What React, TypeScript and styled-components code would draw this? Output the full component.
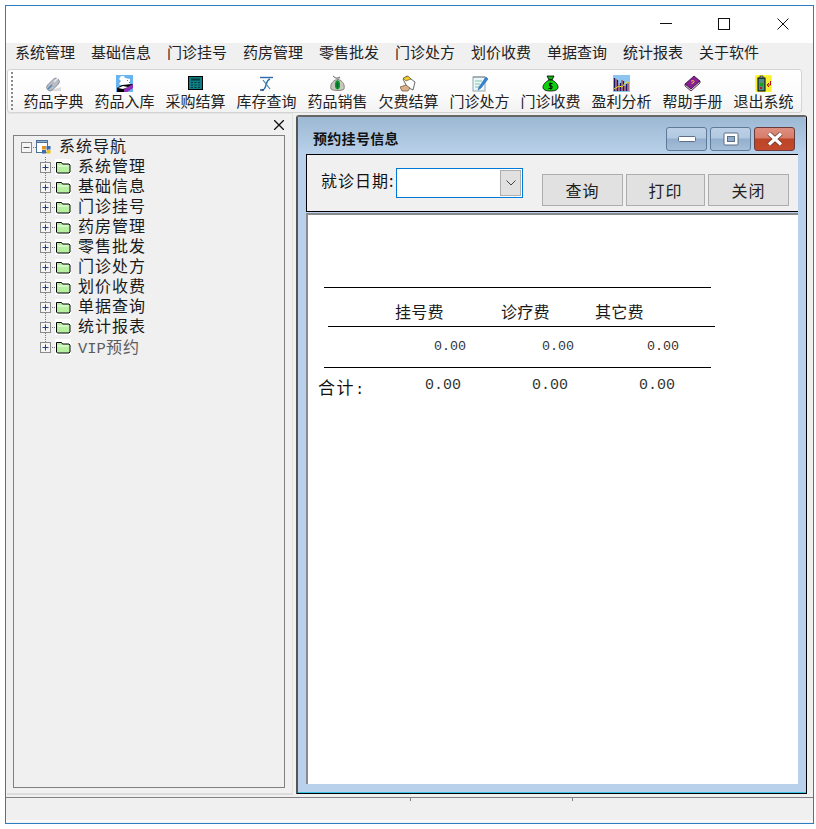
import React from 'react'
import styled, { createGlobalStyle } from 'styled-components'

const GlobalStyle = createGlobalStyle`
  html, body {
    margin: 0;
    padding: 0;
    background: #fff;
    font-family: "Noto Sans CJK SC", "Liberation Sans", sans-serif;
    color: #111;
  }
  * { box-sizing: border-box; }
`
const MONO = `"Liberation Mono", "Noto Sans CJK SC", monospace`

const Window = styled.div`
  margin: 5px 0 0 5px;
  width: 809px;
  height: 819px;
  border: 1px solid #2b7cc0;
  background: #f0f0f0;
  display: flex;
  flex-direction: column;
`
const TitleBar = styled.div`
  height: 37px;
  background: #fff;
  display: flex;
  justify-content: flex-end;
  padding: 0 1px 1px 0;
`
const CaptionButton = styled.div`
  width: 58.5px;
  display: flex;
  align-items: center;
  justify-content: center;
`
const MenuBar = styled.div`
  height: 25px;
  padding: 0 0 7px 1px;
  display: flex;
  align-items: center;
  background: #f0f0f0;
`
const MenuItem = styled.div`
  width: 76px;
  text-align: center;
  font-size: 15px;
  line-height: 18px;
  color: #222;
`
const Toolbar = styled.div`
  height: 44px;
  margin: 1px 11px 0 1px;
  border: 1px solid #d4d4d4;
  border-radius: 3px;
  background: linear-gradient(#ffffff, #fbfbfb 60%, #f2f2f2);
  display: flex;
  padding-left: 3px;
`
const Grip = styled.div`
  width: 2px;
  margin-top: 2px;
  height: 38px;
  background: repeating-linear-gradient(#8a8a8a 0 2px, transparent 2px 4px);
  margin-right: 5px;
`
const ToolItem = styled.div`
  width: 71px;
  display: flex;
  flex-direction: column;
  align-items: center;
  padding-top: 5px;
`
const ToolIcon = styled.svg`
  width: 17px;
  height: 17px;
  display: block;
`
const ToolLabel = styled.div`
  font-size: 15px;
  line-height: 18px;
  white-space: nowrap;
  color: #222;
`
const Main = styled.div`
  height: 682px;
  display: flex;
`
const SidePanel = styled.div`
  width: 286px;
  margin-left: 1px;
  border-top: 1px solid #e4e4e4;
  border-right: 1px solid #e2e2e2;
  border-bottom: 2px solid #dcdcdc;
  display: flex;
  flex-direction: column;
  padding: 0 7px 5px 6px;
`
const SideHead = styled.div`
  height: 21px;
  display: flex;
  align-items: center;
  justify-content: flex-end;
  padding-right: 1px;
`
const TreeBox = styled.div`
  flex: 1;
  border: 1px solid #808080;
  background: #f0f0f0;
  padding-top: 1px;
`
const TreeRow = styled.div<{ $root?: boolean }>`
  height: 20px;
  display: flex;
  align-items: center;
  padding-left: ${(p) => (p.$root ? '2px' : '21px')};
`
const TreeLabel = styled.div<{ $muted?: boolean }>`
  font-size: 16px;
  letter-spacing: 1px;
  line-height: 16px;
  white-space: nowrap;
  margin-left: 7px;
  padding-bottom: ${(p) => (p.$muted ? '0' : '5px')};
  color: ${(p) => (p.$muted ? '#5c5c5c' : '#1a1a1a')};
`
const Latin = styled.span`
  font-family: ${MONO};
  font-size: 15.5px;
  letter-spacing: 0;
`
const MdiArea = styled.div`
  flex: 1;
  margin-left: 3px;
  padding: 0 6px 1px 0;
  display: flex;
`
const Child = styled.div`
  flex: 1;
  margin-top: 2px;
  border: 1px solid #000;
  border-left: 2px solid #555;
  border-top: 2px solid #666;
  border-radius: 3px 3px 0 0;
  background: #b9d1ea;
  box-shadow: inset 0 -1px 0 #3fc3e6;
  display: flex;
  flex-direction: column;
`
const ChildTitle = styled.div`
  height: 37px;
  background: linear-gradient(#9db8d3, #b9d1ea);
  display: flex;
  align-items: center;
  justify-content: space-between;
  padding: 6px 11px 0 15px;
  border-radius: 4px 4px 0 0;
`
const ChildCaption = styled.div`
  font-size: 14px;
  font-weight: 700;
  color: #111;
  letter-spacing: 0.3px;
  padding-bottom: 2px;
`
const ChildButtons = styled.div`
  display: flex;
  gap: 3px;
`
const ChildButton = styled.div<{ $close?: boolean }>`
  width: 41px;
  height: 24px;
  border: 1px solid ${(p) => (p.$close ? '#6b3a3a' : '#5d7a99')};
  border-radius: 3px;
  display: flex;
  align-items: center;
  justify-content: center;
  background: ${(p) =>
    p.$close
      ? 'linear-gradient(#dd8f7f 0, #d67c6a 45%, #bd4527 50%, #c2492c 100%)'
      : 'linear-gradient(#bcd0e6 0, #b2c9e1 45%, #93afcd 50%, #a5bed9 100%)'};
`
const ChildBody = styled.div`
  flex: 1;
  margin: 0 8px 9px 8px;
  display: flex;
  flex-direction: column;
`
const FormBar = styled.div`
  height: 58px;
  background: #f0f0f0;
  border: 1px solid #000;
  border-right: none;
  display: flex;
  padding: 13px 0 0 14px;
`
const FieldLabel = styled.div`
  font-size: 16px;
  line-height: 24px;
  letter-spacing: 1px;
  width: 75px;
  white-space: nowrap;
`
const Combo = styled.div`
  width: 127px;
  height: 30px;
  border: 1px solid #0078d7;
  background: #fff;
  display: flex;
  justify-content: flex-end;
  padding: 1px;
`
const ComboArrow = styled.div`
  width: 21px;
  height: 26px;
  background: #e1e1e1;
  border: 1px solid #adadad;
  display: flex;
  align-items: center;
  justify-content: center;
`
const FormButtons = styled.div`
  display: flex;
  gap: 3px;
  margin: 6px 0 0 19px;
`
const FormButton = styled.div<{ $width: number }>`
  width: ${(p) => p.$width}px;
  height: 32px;
  background: #e1e1e1;
  border: 1px solid #adadad;
  display: flex;
  align-items: center;
  justify-content: center;
  font-size: 16px;
  letter-spacing: 1px;
  color: #222;
`
const ReportSheet = styled.div`
  flex: 1;
  margin-top: 1px;
  background: #fff;
  border-top: 2px solid #8a8a8a;
  border-left: 2px solid #8a8a8a;
  padding-top: 72px;
`
const Rule = styled.div<{ $indent: number }>`
  height: 1px;
  width: 387px;
  margin-left: ${(p) => p.$indent}px;
  background: #000;
`
const ReportRow = styled.div<{ $height: number; $indent: number; $cols: string; $shift?: number }>`
  height: ${(p) => p.$height}px;
  padding: ${(p) => Math.max(p.$shift ?? 0, 0)}px 0 ${(p) => Math.max(-(p.$shift ?? 0), 0)}px ${(p) => p.$indent}px;
  display: grid;
  grid-template-columns: ${(p) => p.$cols};
  align-items: center;
`
const HeadCell = styled.div`
  font-size: 16px;
  letter-spacing: 0.3px;
  white-space: nowrap;
  color: #1a1a1a;
`
const Amount = styled.div<{ $size: number }>`
  font-family: ${MONO};
  font-size: ${(p) => p.$size}px;
  white-space: nowrap;
  color: #333;
`
const TotalLabel = styled.div`
  font-size: 17px;
  letter-spacing: 1.5px;
  line-height: 20px;
  padding-top: 7px;
  white-space: nowrap;
`
const StatusBar = styled.div`
  margin-top: 2px;
  height: 25px;
  border-top: 1px solid #808080;
  border-bottom: 2px solid #fafafa;
  display: flex;
  background: #f0f0f0;
`
const StatusPanel = styled.div<{ $width: number }>`
  width: ${(p) => p.$width}px;
  background: linear-gradient(#808080, #808080) right top / 1px 3px no-repeat;
`

const MENUS = ['系统管理', '基础信息', '门诊挂号', '药房管理', '零售批发', '门诊处方', '划价收费', '单据查询', '统计报表', '关于软件']
const TREE = ['系统管理', '基础信息', '门诊挂号', '药房管理', '零售批发', '门诊处方', '划价收费', '单据查询', '统计报表']

const Pill = () => (
  <ToolIcon viewBox="0 0 17 17">
    <path d="M2 16h14v-4l-6 2z" fill="#dcdcdc" />
    <rect x="0.500" y="6" width="15" height="7" rx="3.500" transform="rotate(-45 8 9.500)" fill="#b9bcc4" stroke="#7f8794" strokeWidth="0.800" />
    <path d="M3 14l4-4" stroke="#4d86b5" strokeWidth="1.600" />
    <path d="M9 7l4-4" stroke="#eceef2" strokeWidth="1.400" />
  </ToolIcon>
)
const StockIn = () => (
  <ToolIcon viewBox="0 0 17 17">
    <rect width="17" height="17" fill="#69b4ee" />
    <path d="M5 1h3l1 2 5 1v5L7 11l-4-2 2-3-2-2z" fill="#fff" />
    <path d="M11 5h1v1h-1zM13 7h1v1h-1z" fill="#e0409a" />
    <path d="M1 13l5-3 11-1v2L8 17H1z" fill="#000" />
    <path d="M8 14l9-5v4l-6 4H8z" fill="#8d2fb5" />
    <path d="M2 13l5-2 5 1-5 2z" fill="#fff" />
  </ToolIcon>
)
const Calc = () => (
  <ToolIcon viewBox="0 0 17 17">
    <rect x="1.500" y="1.500" width="14" height="13" fill="#0b7f83" stroke="#000" />
    <rect x="4" y="3.500" width="9" height="2" fill="#053b3d" />
    <path d="M4 7.500h2M7.500 7.500h2M11 7.500h2M4 10h2M7.500 10h2M11 10h2M4 12.500h2M7.500 12.500h2M11 12.500h2" stroke="#053b3d" />
  </ToolIcon>
)
const Stock = () => (
  <ToolIcon viewBox="0 0 17 17">
    <path d="M2 2.500h13" stroke="#2d6ea8" strokeWidth="1.400" />
    <path d="M4 15c3 0 3-2 4-5s1-5 4-6" stroke="#2d6ea8" strokeWidth="1.400" fill="none" />
    <path d="M5 5l7 9" stroke="#3f7fb8" strokeWidth="1.200" />
    <path d="M2 15h4" stroke="#1b3f78" strokeWidth="1.400" />
  </ToolIcon>
)
const MoneyBag = () => (
  <ToolIcon viewBox="0 0 17 17">
    <path d="M4 1l3 2 4-1-2 3z" fill="#b8b8a8" stroke="#666" strokeWidth="0.600" />
    <path d="M6 5h5c3 2 5 5 4 9-1 2-11 2-13 0-1-4 1-7 4-9z" fill="#c8c8bc" stroke="#6f6f68" strokeWidth="0.800" />
    <ellipse cx="8.500" cy="10" rx="2.600" ry="4.400" fill="#0d9a35" />
    <path d="M8.500 6.500v7M7 9h3M7 11h3" stroke="#053" strokeWidth="0.700" />
  </ToolIcon>
)
const Debt = () => (
  <ToolIcon viewBox="0 0 17 17">
    <path d="M3 4l4-3 8 6-2 8-6-3z" fill="#fff" stroke="#444" strokeWidth="0.800" />
    <path d="M3 3l5-2 3 3-5 2z" fill="#f2cc1f" stroke="#333" strokeWidth="0.500" />
    <path d="M0 12l6-2 4 3-2 3H2z" fill="#d9b08c" stroke="#6d4d36" strokeWidth="0.700" />
  </ToolIcon>
)
const Rx = () => (
  <ToolIcon viewBox="0 0 17 17">
    <rect x="2" y="2" width="12" height="14" fill="#eef6f8" stroke="#8fa6ad" />
    <path d="M3 1v2M5 1v2M7 1v2M9 1v2M11 1v2M13 1v2" stroke="#7f9096" />
    <path d="M4 6h7M4 9h5M4 12h4" stroke="#7fc2b5" />
    <path d="M15 2l-7 10-1 3 3-2 7-9z" fill="#2f86d8" stroke="#1d5a99" strokeWidth="0.500" />
  </ToolIcon>
)
const CashBag = () => (
  <ToolIcon viewBox="0 0 17 17">
    <path d="M5 1h7l-2 4H7z" fill="#0fb30f" stroke="#000" strokeWidth="0.800" />
    <path d="M7 5h3c4 2 6 5 6 7 0 3-3 4-7.500 4S1 15 1 12c0-2 2-5 6-7z" fill="#0fd00f" stroke="#000" strokeWidth="0.800" />
    <path d="M10.500 8.500H7.500v2.500h2.500v2.500H6.500M8.700 7.500v7" stroke="#000" strokeWidth="0.900" fill="none" />
  </ToolIcon>
)
const Profit = () => (
  <ToolIcon viewBox="0 0 17 17">
    <rect width="17" height="17" fill="#8cc4f2" />
    <path d="M1.500 3v13M4.500 5v11M7.500 8v8M10.500 6v10M13.500 9v7" stroke="#1a1a60" strokeWidth="1.300" />
    <path d="M3 4v12M6 10v6M9 5v11M12 11v5M15 7v9" stroke="#c01818" strokeWidth="1" />
    <path d="M1 14l5-3 3 1 4-5 3 1" stroke="#f0e020" strokeWidth="1" fill="none" />
  </ToolIcon>
)
const Book = () => (
  <ToolIcon viewBox="0 0 17 17">
    <path d="M1 9l9-8 6 5-9 8z" fill="#8c1f96" stroke="#2c0a30" strokeWidth="0.800" />
    <path d="M1 9l6 5 9-8v2l-9 8-6-5z" fill="#e8d8e8" stroke="#2c0a30" strokeWidth="0.800" />
    <path d="M7 6.500c1-1.500 3.500-1 3 .5-.3 1-2 1-2.500 2" stroke="#f0e020" strokeWidth="1" fill="none" />
  </ToolIcon>
)
const Exit = () => (
  <ToolIcon viewBox="0 0 17 17">
    <rect width="17" height="17" fill="#f5f032" />
    <path d="M0 0h17v17H0z" fill="none" stroke="#fff" strokeWidth="1" strokeDasharray="1 1" />
    <rect x="3" y="3" width="7" height="13" fill="#4f8f86" stroke="#000" />
    <rect x="5" y="1" width="3" height="2" fill="#9bb" stroke="#000" strokeWidth="0.600" />
    <rect x="5" y="8" width="3" height="3" fill="#1ca01c" />
    <rect x="5" y="12" width="2" height="2" fill="#c01818" />
    <path d="M15.500 6v4h-3M14 8l-2 2 2 2" stroke="#b01010" strokeWidth="1" fill="none" />
  </ToolIcon>
)

const TOOLS: [string, React.FC][] = [
  ['药品字典', Pill],
  ['药品入库', StockIn],
  ['采购结算', Calc],
  ['库存查询', Stock],
  ['药品销售', MoneyBag],
  ['欠费结算', Debt],
  ['门诊处方', Rx],
  ['门诊收费', CashBag],
  ['盈利分析', Profit],
  ['帮助手册', Book],
  ['退出系统', Exit],
]

const Expander = ({ open, last, root }: { open?: boolean; last?: boolean; root?: boolean }) => (
  <svg width="20" height="20" viewBox="0 0 20 20" style={{ display: 'block', flex: 'none' }}>
    {!root && <path d={last ? 'M10.500 0v10' : 'M10.500 0v20'} stroke="#777" strokeDasharray="1 1" />}
    <path d="M15 10.500h5" stroke="#777" strokeDasharray="1 1" />
    <rect x="5.500" y="5.500" width="10" height="10" fill="#f4f4f4" stroke="#8a8a8a" />
    <path d="M7.500 10.500h6" stroke={open ? '#555' : '#24407a'} />
    {!open && <path d="M10.500 7.500v6" stroke="#24407a" />}
  </svg>
)
const Folder = () => (
  <svg width="16" height="16" viewBox="0 0 16 16" style={{ display: 'block', flex: 'none' }}>
    <rect width="16" height="16" fill="#fff" />
    <path d="M1.500 3.500h5l1 1.500h6.500l1 1v7l-1 1H2.500l-1-1z" fill="#b6f0a0" stroke="#000" />
    <path d="M2.500 6h11v2h-11z" fill="#d6f8c8" />
  </svg>
)
const RootIcon = () => (
  <svg width="16" height="16" viewBox="0 0 16 16" style={{ display: 'block', flex: 'none' }}>
    <rect x="0.500" y="1.500" width="11" height="12" fill="#fff" stroke="#4d6f94" />
    <rect x="0.500" y="1.500" width="11" height="2" fill="#8fb4d8" stroke="#4d6f94" />
    <rect x="6" y="7" width="4" height="3.500" fill="#e8901a" />
    <rect x="10.500" y="7" width="4" height="3.500" fill="#3a6ab0" />
    <rect x="6" y="11" width="4" height="3.500" fill="#3a6ab0" />
    <rect x="10.500" y="11" width="4" height="3.500" fill="#e8c01a" />
  </svg>
)

export default function App() {
  return (
    <>
      <GlobalStyle />
      <Window>
        <TitleBar>
          <CaptionButton>
            <svg width="12" height="12" viewBox="0 0 12 12"><path d="M0 5.500h12" stroke="#111" /></svg>
          </CaptionButton>
          <CaptionButton>
            <svg width="12" height="12" viewBox="0 0 12 12"><rect x="0.500" y="0.500" width="11" height="11" fill="none" stroke="#111" /></svg>
          </CaptionButton>
          <CaptionButton>
            <svg width="12" height="12" viewBox="0 0 12 12"><path d="M0.500 0.500l11 11M11.500 0.500l-11 11" stroke="#111" /></svg>
          </CaptionButton>
        </TitleBar>
        <MenuBar>
          {MENUS.map((m) => (
            <MenuItem key={m}>{m}</MenuItem>
          ))}
        </MenuBar>
        <Toolbar>
          <Grip />
          {TOOLS.map(([label, Icon]) => (
            <ToolItem key={label}>
              <Icon />
              <ToolLabel>{label}</ToolLabel>
            </ToolItem>
          ))}
        </Toolbar>
        <Main>
          <SidePanel>
            <SideHead>
              <svg width="10" height="10" viewBox="0 0 10 10"><path d="M0 0l10 10M10 0L0 10" stroke="#111" strokeWidth="1.300" /></svg>
            </SideHead>
            <TreeBox>
              <TreeRow $root>
                <Expander open root />
                <RootIcon />
                <TreeLabel>系统导航</TreeLabel>
              </TreeRow>
              {TREE.map((t) => (
                <TreeRow key={t}>
                  <Expander />
                  <Folder />
                  <TreeLabel>{t}</TreeLabel>
                </TreeRow>
              ))}
              <TreeRow>
                <Expander last />
                <Folder />
                <TreeLabel $muted><Latin>VIP</Latin>预约</TreeLabel>
              </TreeRow>
            </TreeBox>
          </SidePanel>
          <MdiArea>
            <Child>
              <ChildTitle>
                <ChildCaption>预约挂号信息</ChildCaption>
                <ChildButtons>
                  <ChildButton>
                    <svg width="18" height="8" viewBox="0 0 18 8"><rect x="0.500" y="1.500" width="17" height="5" rx="1" fill="#fff" stroke="#5d6f86" /></svg>
                  </ChildButton>
                  <ChildButton>
                    <svg width="16" height="14" viewBox="0 0 16 14"><rect x="1" y="1" width="14" height="12" rx="1" fill="#fff" stroke="#5d6f86" /><rect x="4.500" y="4.500" width="7" height="5" fill="#8fadcb" stroke="#5d6f86" /></svg>
                  </ChildButton>
                  <ChildButton $close>
                    <svg width="18" height="14" viewBox="0 0 18 14"><path d="M3 1.500l12 11M15 1.500l-12 11" stroke="#5c3030" strokeWidth="4.600" /><path d="M3 1.500l12 11M15 1.500l-12 11" stroke="#fff" strokeWidth="3.200" /></svg>
                  </ChildButton>
                </ChildButtons>
              </ChildTitle>
              <ChildBody>
                <FormBar>
                  <FieldLabel>就诊日期:</FieldLabel>
                  <Combo>
                    <ComboArrow>
                      <svg width="10" height="6" viewBox="0 0 10 6"><path d="M0.500 0.500L5 5l4.500-4.500" fill="none" stroke="#444" /></svg>
                    </ComboArrow>
                  </Combo>
                  <FormButtons>
                    <FormButton $width={81}>查询</FormButton>
                    <FormButton $width={79}>打印</FormButton>
                    <FormButton $width={81}>关闭</FormButton>
                  </FormButtons>
                </FormBar>
                <ReportSheet>
                  <Rule $indent={16} />
                  <ReportRow $height={38} $indent={87} $cols="106px 94px 60px" $shift={8}>
                    <HeadCell>挂号费</HeadCell>
                    <HeadCell>诊疗费</HeadCell>
                    <HeadCell>其它费</HeadCell>
                  </ReportRow>
                  <Rule $indent={20} />
                  <ReportRow $height={40} $indent={126} $cols="108px 105px 60px" $shift={-2}>
                    <Amount $size={13.33}>0.00</Amount>
                    <Amount $size={13.33}>0.00</Amount>
                    <Amount $size={13.33}>0.00</Amount>
                  </ReportRow>
                  <Rule $indent={16} />
                  <ReportRow $height={34} $indent={10} $cols="107px 107px 107px 60px">
                    <TotalLabel>合计<Latin>:</Latin></TotalLabel>
                    <Amount $size={15}>0.00</Amount>
                    <Amount $size={15}>0.00</Amount>
                    <Amount $size={15}>0.00</Amount>
                  </ReportRow>
                </ReportSheet>
              </ChildBody>
            </Child>
          </MdiArea>
        </Main>
        <StatusBar>
          <StatusPanel $width={405} />
          <StatusPanel $width={162} />
        </StatusBar>
      </Window>
    </>
  )
}
